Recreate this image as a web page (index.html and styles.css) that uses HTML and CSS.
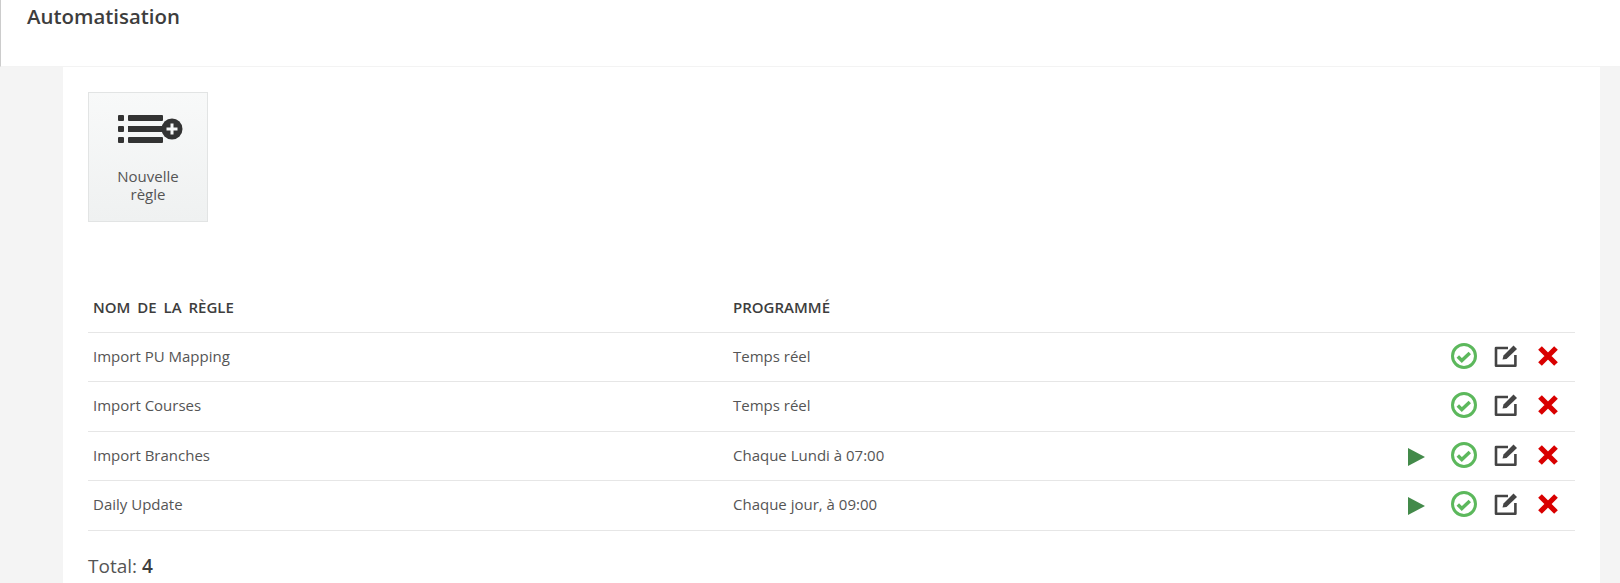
FILE: index.html
```html
<!DOCTYPE html>
<html lang="fr">
<head>
  <meta charset="UTF-8" />
  <title>Automatisation</title>
  <link rel="stylesheet" href="styles.css">
</head>
<body>

  <div class="header">
    <h1>Automatisation</h1>
  </div>

  <div class="content">
    <a href="#" class="btn-new">
      <svg class="icon-new" width="66" height="30" viewBox="0 0 66 30">
        <rect x="0" y="1" width="6" height="6" rx="1" fill="#333" />
        <rect x="0" y="12" width="6" height="6" rx="1" fill="#333" />
        <rect x="0" y="23" width="6" height="6" rx="1" fill="#333" />
        <rect x="10" y="1" width="35" height="6" rx="1" fill="#333" />
        <rect x="10" y="12" width="40" height="6" fill="#333" />
        <rect x="10" y="23" width="35" height="6" rx="1" fill="#333" />
        <circle cx="54" cy="15" r="10.5" fill="#333" />
        <path d="M54 9.500v11M48.500 15h11" stroke="#f5f6f6" stroke-width="3" />
      </svg>
      <span>Nouvelle règle</span>
    </a>

    <table class="rules">
      <thead>
        <tr>
          <th class="col-name">Nom de la règle</th>
          <th class="col-sched">Programmé</th>
          <th></th>
        </tr>
      </thead>
      <tbody>
        <tr>
          <td>Import PU Mapping</td>
          <td>Temps réel</td>
          <td>
            <div class="actions">
              <svg width="26" height="26" viewBox="0 0 26 26"><circle cx="13" cy="13" r="11.500" fill="none" stroke="#5cb85c" stroke-width="3" /><path d="M6.800 13.500l4 4 8-7.500" fill="none" stroke="#5cb85c" stroke-width="3.500" /></svg>
              <svg width="26" height="26" viewBox="0 0 26 26"><path d="M15 5H3v17.700h19.400V12" fill="none" stroke="#444" stroke-width="2.600" stroke-linejoin="round" /><path d="M9.500 16.500l1-4L20.500 2.500 24 6 13.500 16z" fill="#444" /></svg>
              <svg width="26" height="26" viewBox="0 0 26 26"><path d="M5 5l16 16M21 5L5 21" stroke="#d90000" stroke-width="5.200" /></svg>
            </div>
          </td>
        </tr>
        <tr>
          <td>Import Courses</td>
          <td>Temps réel</td>
          <td>
            <div class="actions">
              <svg width="26" height="26" viewBox="0 0 26 26"><circle cx="13" cy="13" r="11.500" fill="none" stroke="#5cb85c" stroke-width="3" /><path d="M6.800 13.500l4 4 8-7.500" fill="none" stroke="#5cb85c" stroke-width="3.500" /></svg>
              <svg width="26" height="26" viewBox="0 0 26 26"><path d="M15 5H3v17.700h19.400V12" fill="none" stroke="#444" stroke-width="2.600" stroke-linejoin="round" /><path d="M9.500 16.500l1-4L20.500 2.500 24 6 13.500 16z" fill="#444" /></svg>
              <svg width="26" height="26" viewBox="0 0 26 26"><path d="M5 5l16 16M21 5L5 21" stroke="#d90000" stroke-width="5.200" /></svg>
            </div>
          </td>
        </tr>
        <tr>
          <td>Import Branches</td>
          <td>Chaque Lundi à 07:00</td>
          <td>
            <div class="actions">
              <svg class="play" width="17" height="18" viewBox="0 0 17 18"><path d="M0 0l17 9L0 18z" fill="#438a4a" /></svg>
              <svg width="26" height="26" viewBox="0 0 26 26"><circle cx="13" cy="13" r="11.500" fill="none" stroke="#5cb85c" stroke-width="3" /><path d="M6.800 13.500l4 4 8-7.500" fill="none" stroke="#5cb85c" stroke-width="3.500" /></svg>
              <svg width="26" height="26" viewBox="0 0 26 26"><path d="M15 5H3v17.700h19.400V12" fill="none" stroke="#444" stroke-width="2.600" stroke-linejoin="round" /><path d="M9.500 16.500l1-4L20.500 2.500 24 6 13.500 16z" fill="#444" /></svg>
              <svg width="26" height="26" viewBox="0 0 26 26"><path d="M5 5l16 16M21 5L5 21" stroke="#d90000" stroke-width="5.200" /></svg>
            </div>
          </td>
        </tr>
        <tr>
          <td>Daily Update</td>
          <td>Chaque jour, à 09:00</td>
          <td>
            <div class="actions">
              <svg class="play" width="17" height="18" viewBox="0 0 17 18"><path d="M0 0l17 9L0 18z" fill="#438a4a" /></svg>
              <svg width="26" height="26" viewBox="0 0 26 26"><circle cx="13" cy="13" r="11.500" fill="none" stroke="#5cb85c" stroke-width="3" /><path d="M6.800 13.500l4 4 8-7.500" fill="none" stroke="#5cb85c" stroke-width="3.500" /></svg>
              <svg width="26" height="26" viewBox="0 0 26 26"><path d="M15 5H3v17.700h19.400V12" fill="none" stroke="#444" stroke-width="2.600" stroke-linejoin="round" /><path d="M9.500 16.500l1-4L20.500 2.500 24 6 13.500 16z" fill="#444" /></svg>
              <svg width="26" height="26" viewBox="0 0 26 26"><path d="M5 5l16 16M21 5L5 21" stroke="#d90000" stroke-width="5.200" /></svg>
            </div>
          </td>
        </tr>
      </tbody>
    </table>

    <div class="total">Total: <strong>4</strong></div>
  </div>

</body>
</html>
```

FILE: styles.css
```css
* { margin: 0; padding: 0; box-sizing: border-box; }
html, body { height: 583px; overflow: hidden; }
body {
  font-family: "Open Sans", Arial, sans-serif;
  background: #f4f4f4;
  color: #555;
  font-size: 15px;
}
.header {
  height: 67px;
  background: #fff;
  border-left: 1px solid #ccc;
  border-bottom: 1px solid #f3f3f3;
  padding: 3px 0 0 26px;
}
h1 {
  font-size: 20.4px;
  font-weight: 600;
  line-height: 26px;
  color: #3d3d3d;
}
.content {
  background: #fff;
  margin: 0 20px 0 63px;
  height: 516px;
  padding: 25px 25px 0;
}
.btn-new {
  display: flex;
  flex-direction: column;
  align-items: center;
  width: 120px;
  height: 130px;
  padding: 21px 20px 0;
  background: linear-gradient(#f8f9f9, #eff1f1);
  border: 1px solid #e2e4e4;
  color: #555;
  text-decoration: none;
  text-align: center;
  line-height: 18px;
}
.icon-new { margin: 0 0 23px 5px; flex-shrink: 0; }
.rules {
  width: 100%;
  border-collapse: collapse;
  margin-top: 61px;
}
.rules th {
  height: 49px;
  padding: 0 5px;
  text-align: left;
  font-size: 15px;
  font-weight: 600;
  text-transform: uppercase;
  color: #3d3d3d;
  border-bottom: 1px solid #e6e6e6;
}
.rules th.col-name { word-spacing: 3px; }
.rules td {
  height: 49.500px;
  padding: 0 5px 2px;
  border-bottom: 1px solid #e6e6e6;
}
.col-name { width: 640px; }
.col-sched { width: 400px; }
.actions {
  display: flex;
  justify-content: flex-end;
  align-items: center;
  gap: 16px;
  padding-right: 9px;
}
.play { margin: 4px 10px 0 0; }
.total {
  margin-top: 23px;
  font-size: 19px;
  line-height: 24px;
}
.total strong {
  font-weight: 600;
  color: #3d3d3d;
}
```
